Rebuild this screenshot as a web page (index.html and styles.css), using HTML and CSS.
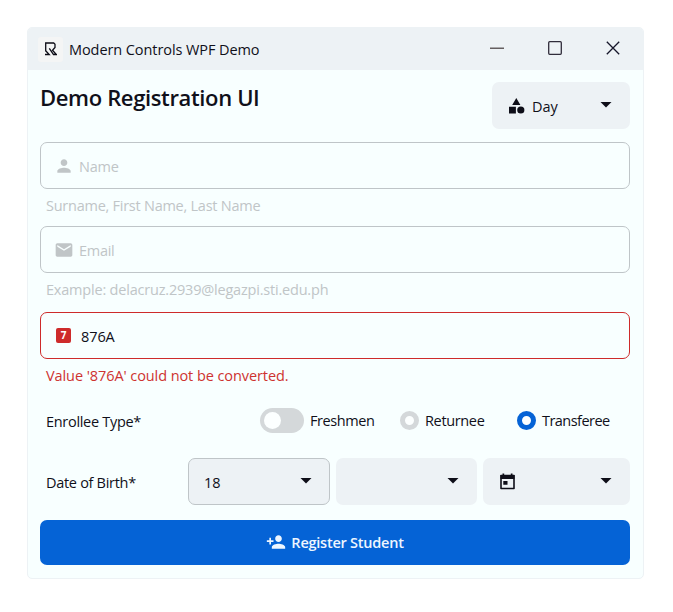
FILE: index.html
```html
<!DOCTYPE html>
<html lang="en">
<head>
<meta charset="utf-8">
<title>Modern Controls WPF Demo</title>
<link rel="stylesheet" href="styles.css">
</head>
<body>
<main class="window">
  <header class="titlebar">
    <span class="logo"><svg width="13" height="14" viewBox="0 0 13 14" fill="none" stroke="#0c0c16" stroke-width="1.3"><path d="M1.700 9.500V1h8l1.300 1.200v3.300L8.500 8.200l3.800 4.300H9.500L5.300 6.300M1.700 8.800l3.500 3.700H1"/></svg></span>
    <span class="app-name">Modern Controls WPF Demo</span>
    <div class="controls">
      <svg width="14" height="14" viewBox="0 0 14 14"><path d="M0 7.250h14" stroke="#655f60" stroke-width="1.5"/></svg>
      <svg width="14" height="14" viewBox="0 0 14 14"><rect x=".7" y=".7" width="12.6" height="12.6" rx="1" fill="none" stroke="#302c3a" stroke-width="1.3"/></svg>
      <svg width="14" height="14" viewBox="0 0 14 14"><path d="M.8.8l12.4 12.4M13.2.8L.8 13.2" stroke="#16162a" stroke-width="1.3"/></svg>
    </div>
  </header>
  <form class="content">
    <div class="heading">
      <h1>Demo Registration UI</h1>
      <div class="select shift">
        <svg class="shapes" width="16" height="16" viewBox="0 0 16 16" fill="#0e0e18"><path d="M7.3 0l4.1 7.1H3.2zM0 8.8h6.9v6.6H0z"/><circle cx="11.8" cy="12" r="3.6"/></svg>
        <span class="day">Day</span><i class="caret"></i>
      </div>
    </div>
    <div class="field"><svg class="icon" width="20" height="20" viewBox="0 0 24 24"><path d="M12 12c2.21 0 4-1.79 4-4s-1.79-4-4-4-4 1.79-4 4 1.79 4 4 4zm0 2c-2.67 0-8 1.34-8 4v2h16v-2c0-2.66-5.33-4-8-4z"/></svg><span class="t-name">Name</span></div>
    <p class="hint"><span class="t-surname">Surname, First Name, Last Name</span></p>
    <div class="field"><svg class="icon" width="20" height="20" viewBox="0 0 24 24"><path d="M20 4H4c-1.100 0-2 .9-2 2v12c0 1.100.9 2 2 2h16c1.100 0 2-.9 2-2V6c0-1.100-.9-2-2-2zm0 4l-8 5-8-5V6l8 5 8-5v2z"/></svg><span class="t-email">Email</span></div>
    <p class="hint email-hint"><span class="t-example">Example: delacruz.2939@legazpi.sti.edu.ph</span></p>
    <div class="field invalid"><span class="number-icon">7</span><span class="t-value">876A</span></div>
    <p class="hint error"><span class="t-error">Value '876A' could not be converted.</span></p>
    <div class="enrollee">
      <span class="label">Enrollee Type*</span>
      <span class="toggle"></span><span class="t-fresh">Freshmen</span>
      <span class="radio"></span><span class="t-return">Returnee</span>
      <span class="radio on"></span><span class="t-transfer">Transferee</span>
    </div>
    <div class="birth">
      <span class="label">Date of Birth*</span>
      <div class="select outlined"><span class="t-day">18</span><i class="caret"></i></div>
      <div class="select"><i class="caret"></i></div>
      <div class="select date"><svg width="15" height="17" viewBox="0 0 15 17"><path d="M1 2.500h13v13H1z" fill="none" stroke="#0e0e18" stroke-width="1.600" stroke-linejoin="round"/><path d="M.5 2h14v4H.5zM2.500.5h1.700V3H2.500zM10.800.5h1.700V3h-1.700zM3.300 8h4.200v3.800H3.300z" fill="#0e0e18"/></svg><i class="caret"></i></div>
    </div>
    <button type="button" class="submit"><svg width="20" height="20" viewBox="0 0 24 24" fill="#eef6ff"><path d="M15 12c2.210 0 4-1.790 4-4s-1.790-4-4-4-4 1.790-4 4 1.790 4 4 4zm-9-2V7H4v3H1v2h3v3h2v-3h3v-2H6zm9 4c-2.670 0-8 1.340-8 4v2h16v-2c0-2.660-5.330-4-8-4z"/></svg><span class="t-submit">Register Student</span></button>
  </form>
</main>
</body>
</html>
```
FILE: styles.css
```css
* { box-sizing: border-box; }
body { margin: 0; padding: 27px; background: #fff; color: #10101a; font: 14.5px/20px "Open Sans", "Noto Sans", sans-serif; white-space: nowrap; }
.window { width: 617px; height: 552px; background: #f8ffff; border: 1px solid #edf2f5; border-radius: 5px; overflow: hidden; }
.titlebar { height: 42px; padding: 0 23px 0 10px; display: flex; align-items: center; background: #edf2f5; }
.logo { width: 25px; height: 25px; margin-right: 6px; background: #f4f5f5; border-radius: 3px; display: grid; place-items: center; }
.app-name { padding-top: 2px; letter-spacing: -.08px; }
.controls { margin: -2px 0 0 auto; display: flex; gap: 44px; }
.content { padding: 12px 13px 0 12px; }
.heading { height: 60px; display: flex; justify-content: space-between; }
h1 { margin: 0; font-size: 22px; font-weight: 600; line-height: 31px; letter-spacing: -.36px; }
.select { height: 47px; background: #edf2f5; border-radius: 7px; display: flex; align-items: center; padding: 0 18px 0 16px; }
.select span { padding-top: 2px; }
.shift { flex: 0 0 138px; padding-left: 17px; }
.shapes { margin-right: 7px; }
.caret { width: 12px; height: 6px; margin: -2px 0 0 auto; background: #0e0e18; clip-path: polygon(0 0, 100% 0, 50% 100%); }
.field { height: 47px; border: 1px solid #bfc5c8; border-radius: 7px; display: flex; align-items: center; color: #c0c5c7; padding: 2px 0 0 38px; position: relative; }
.icon { position: absolute; left: 12.5px; top: 12.5px; fill: currentColor; }
.t-name { letter-spacing: -.25px; }
.t-email { letter-spacing: -.3px; }
.hint { margin: 0; height: 37px; padding: 7px 6px 0; color: #c0c5c7; }
.t-surname { letter-spacing: -.25px; }
.t-example { letter-spacing: -.2px; }
.t-error { letter-spacing: -.08px; }
.t-value { letter-spacing: -.1px; }
.email-hint { height: 39px; }
.invalid { border-color: #ce2b2b; color: #10101a; padding-left: 40px; }
.number-icon { position: absolute; left: 15px; top: 15px; width: 15px; height: 15px; border-radius: 2px; background: #ce2b2b; color: #fff; font: bold 10px/15px "Open Sans", sans-serif; text-align: center; }
.error { color: #ce3330; }
.enrollee { display: flex; align-items: center; height: 50px; margin-top: -1px; }
.label { padding: 2px 0 0 6px; letter-spacing: -.3px; }
.enrollee .label { width: 220px; padding-top: 3px; }
.toggle { width: 44px; height: 25px; margin-right: 6px; border-radius: 13px; background: #d4d8da; padding: 4px; }
.toggle::before { content: ""; display: block; width: 17px; height: 17px; border-radius: 50%; background: #fcffff; }
.radio { width: 19px; height: 19px; margin-right: 6px; border: 5px solid #d4d8da; border-radius: 50%; background: #fcffff; }
.radio.on { border-color: #0563d6; }
.t-fresh { width: 90px; padding-top: 1px; letter-spacing: -.42px; }
.t-return { width: 92px; padding-top: 1px; letter-spacing: -.35px; }
.t-transfer { padding-top: 1px; letter-spacing: -.54px; }
.birth { height: 47px; display: grid; grid-template-columns: 142px 142px 141px 147px; column-gap: 6px; align-items: center; margin-top: 13px; }
.outlined { border: 1px solid #bfc5c8; padding: 0 17px 0 15px; }
.submit { width: 100%; height: 45px; padding: 0; margin-top: 15px; border: 0; border-radius: 7px; background: #0563d6; color: #eef6ff; display: flex; align-items: center; justify-content: center; gap: 5px; font: 600 14.5px/20px "Open Sans", "Noto Sans", sans-serif; letter-spacing: -.24px; }
.submit svg { margin-top: -2px; }
.date { padding-left: 17px; }
```
